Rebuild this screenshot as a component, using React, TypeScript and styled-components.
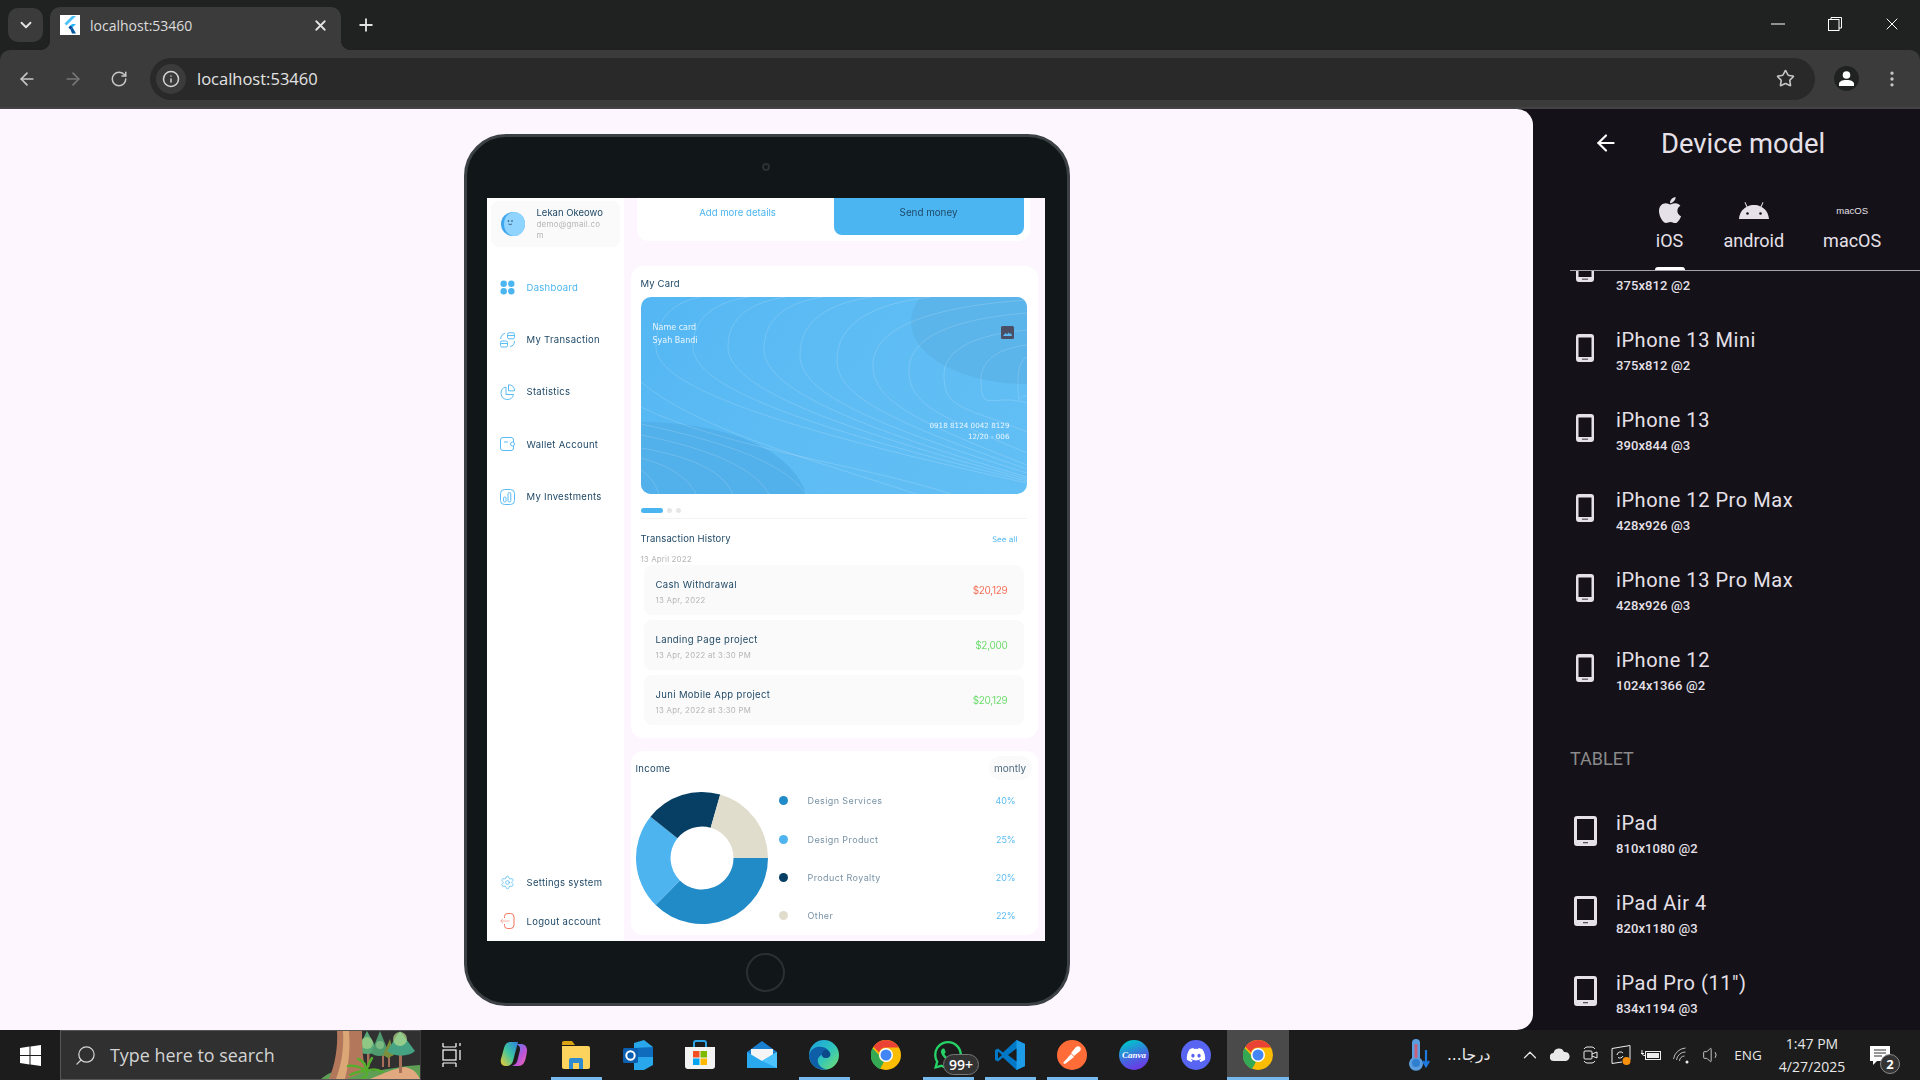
import styled, { createGlobalStyle } from 'styled-components';
import { ArrowLeft, ArrowRight, ChevronDown, ChevronUp, Info, MoreVertical, Plus, RotateCw, Search, Settings, Star, Volume1, X } from 'lucide-react';
import { FaApple, FaDiscord, FaWhatsapp } from 'react-icons/fa';

const GlobalStyle = createGlobalStyle`
    html, body {
        margin: 0;
        padding: 0;
        width: 1920px;
        height: 1080px;
        overflow: hidden;
        background: #202222;
    }
    * { box-sizing: border-box; }
`;

const uiFont = '"Open Sans", "Noto Sans", sans-serif';
const appFont = 'Inter, "Noto Sans", sans-serif';

/* ---------- browser chrome ---------- */

const Shell = styled.div`
    width: 1920px;
    height: 1080px;
    display: flex;
    flex-direction: column;
`;

const TabStrip = styled.div`
    height: 50px;
    background: #202222;
    display: flex;
    align-items: flex-end;
    padding-left: 8px;
    color: #e3e3e3;
`;

const TabSearch = styled.div`
    width: 35px;
    height: 34px;
    margin-bottom: 8px;
    border-radius: 10px;
    background: #3b3b3b;
    display: flex;
    align-items: center;
    justify-content: center;
`;

const Tab = styled.div`
    position: relative;
    width: 291px;
    height: 43px;
    margin-left: 7px;
    padding: 0 12px 7px 10px;
    background: #3b3b3b;
    border-radius: 10px 10px 0 0;
    display: flex;
    align-items: center;
    &::before, &::after {
        content: '';
        position: absolute;
        bottom: 0;
        width: 10px;
        height: 10px;
    }
    &::before {
        left: -10px;
        background: radial-gradient(circle at 0 0, transparent 10px, #3b3b3b 10.5px);
    }
    &::after {
        right: -10px;
        background: radial-gradient(circle at 100% 0, transparent 10px, #3b3b3b 10.5px);
    }
`;

const Favicon = styled.div`
    width: 20px;
    height: 20px;
    background: #fff;
    display: flex;
    align-items: center;
    justify-content: center;
`;

const TabTitle = styled.span`
    flex: 1;
    margin-left: 10px;
    font: 14px ${uiFont};
    color: #dcdcdc;
`;

const NewTab = styled.div`
    margin: 0 0 7px 15px;
    height: 36px;
    display: flex;
    align-items: center;
`;

const WindowButtons = styled.div`
    margin-left: auto;
    align-self: flex-start;
    display: flex;
`;

const WindowButton = styled.div`
    width: 57px;
    height: 47px;
    display: flex;
    align-items: center;
    justify-content: center;
`;

const Toolbar = styled.div`
    height: 59px;
    background: #3b3b3b;
    border-radius: 10px 10px 0 0;
    display: flex;
    align-items: center;
    padding-left: 9px;
    color: #c7c7c7;
    border-bottom: 2px solid #434343;
`;

const ToolButton = styled.div<{ $dim?: boolean }>`
    width: 36px;
    height: 36px;
    margin-right: 10px;
    display: flex;
    align-items: center;
    justify-content: center;
    color: ${(p) => (p.$dim ? '#777' : '#c7c7c7')};
`;

const Omnibox = styled.div`
    width: 1665px;
    height: 42px;
    margin-left: 3px;
    background: #292929;
    border-radius: 21px;
    display: flex;
    align-items: center;
    padding: 0 20px 0 6px;
`;

const SiteInfo = styled.div`
    width: 30px;
    height: 30px;
    border-radius: 50%;
    background: #3b3b3b;
    color: #d5d5d5;
    display: flex;
    align-items: center;
    justify-content: center;
`;

const Url = styled.span`
    flex: 1;
    margin-left: 11px;
    font: 16.5px ${uiFont};
    color: #e3e3e3;
`;

const Profile = styled.div`
    width: 25px;
    height: 25px;
    margin-left: 19px;
    border-radius: 50%;
    background: #202222;
    display: flex;
    align-items: center;
    justify-content: center;
`;

const MenuButton = styled.div`
    margin-left: 23px;
    display: flex;
    color: #c7c7c7;
`;

/* ---------- workspace ---------- */

const Workspace = styled.div`
    flex: 1;
    min-height: 0;
    display: flex;
    background: #141218;
`;

const Preview = styled.div`
    width: 1533px;
    background: #fdf6ff;
    border-radius: 0 16px 16px 0;
    display: flex;
    align-items: center;
    justify-content: center;
`;

const TabletFrame = styled.div`
    width: 606px;
    height: 872px;
    padding: 61px 22px 0 20px;
    background: #111618;
    border: 3px solid #3c4145;
    border-radius: 42px;
    display: flex;
    flex-direction: column;
    align-items: center;
    position: relative;
`;

const Camera = styled.div`
    position: absolute;
    top: 26px;
    left: 295px;
    width: 8px;
    height: 8px;
    border-radius: 50%;
    border: 2px solid #2b3034;
`;

const HomeButton = styled.div`
    width: 39px;
    height: 39px;
    margin-top: 12px;
    border-radius: 50%;
    border: 2px solid #2b3034;
`;

const Screen = styled.div`
    width: 558px;
    height: 743px;
    flex: none;
    display: flex;
    overflow: hidden;
    background: #fdf6ff;
    font-family: ${appFont};
    color: #1f4866;
    filter: blur(0.3px);
`;

const Sidebar = styled.div`
    width: 137px;
    flex: none;
    padding-top: 3px;
    background: #fff;
    display: flex;
    flex-direction: column;
`;

const UserCard = styled.div`
    height: 46px;
    margin: 0 4px;
    padding-left: 10px;
    border-radius: 8px;
    background: #fafafa;
    display: flex;
    align-items: center;
    gap: 12px;
`;

const UserText = styled.div`
    width: 68px;
    word-break: break-all;
`;

const UserName = styled.div`
    margin-bottom: 1px;
    font-size: 9.5px;
    line-height: 11px;
    white-space: nowrap;
`;

const UserMail = styled.div`
    font-size: 8px;
    line-height: 11px;
    color: #b5b5b5;
    letter-spacing: 0.2px;
`;

const NavList = styled.div<{ $bottom?: boolean }>`
    display: flex;
    flex-direction: column;
    margin-top: ${(p) => (p.$bottom ? 'auto' : '14.5px')};
`;

const NavItem = styled.div<{ $active?: boolean; $h: number }>`
    height: ${(p) => p.$h}px;
    padding-left: 13px;
    display: flex;
    align-items: center;
    gap: 12px;
    font-size: 9.5px;
    letter-spacing: 0.3px;
    color: ${(p) => (p.$active ? '#4bb5f1' : '#1f4866')};
    svg { flex: none; }
`;

const Main = styled.div`
    flex: 1;
    min-width: 0;
    overflow: hidden;
`;

const ActionCard = styled.div`
    height: 43px;
    margin: 0 15px 25px 13px;
    padding-right: 6px;
    background: #fff;
    border-radius: 0 0 12px 12px;
    display: flex;
`;

const DetailsLink = styled.div`
    width: 197px;
    height: 29.5px;
    padding-left: 5px;
    display: flex;
    align-items: center;
    justify-content: center;
    font-size: 9.6px;
    color: #4bb5f1;
`;

const SendButton = styled.div`
    flex: 1;
    height: 37px;
    padding-bottom: 7.5px;
    background: #4bb5f1;
    border-radius: 0 0 8px 8px;
    display: flex;
    align-items: center;
    justify-content: center;
    font-size: 9.8px;
`;

const Panel = styled.div`
    margin: 0 7px;
    background: #fff;
    border-radius: 12px;
`;

const CardPanel = styled(Panel)`
    padding: 12px 11px 13px 10px;
`;

const PanelTitle = styled.div`
    font-size: 9.5px;
    line-height: 12px;
    letter-spacing: 0.15px;
`;

const BankCard = styled.div`
    position: relative;
    height: 197px;
    margin-top: 7px;
    border-radius: 10px;
    overflow: hidden;
    background: linear-gradient(120deg, #54b7f3 0%, #5ebcf4 45%, #62bff5 100%);
    padding: 24.5px 17px 51.5px 12px;
    display: flex;
    flex-direction: column;
    justify-content: space-between;
    font-family: "DejaVu Sans", sans-serif;
    color: #eaf6fe;
`;

const CardArt = styled.svg`
    position: absolute;
    inset: 0;
`;

const CardHolder = styled.div`
    position: relative;
    font-size: 8px;
    line-height: 13px;
`;

const CardMeta = styled.div`
    position: relative;
    font-size: 7.2px;
    line-height: 11px;
    text-align: right;
`;

const MissingImage = styled.div`
    position: absolute;
    top: 29px;
    right: 13px;
    width: 13px;
    height: 13px;
    border-radius: 1.5px;
    background: #4a4f66;
    display: flex;
`;

const Pager = styled.div`
    height: 5px;
    margin-top: 14px;
    display: flex;
    align-items: center;
    gap: 4px;
`;

const PagerDot = styled.div<{ $on?: boolean }>`
    width: ${(p) => (p.$on ? 22 : 5)}px;
    height: 5px;
    border-radius: 3px;
    background: ${(p) => (p.$on ? '#4bb5f1' : '#e6e6e6')};
`;

const Rule = styled.div`
    height: 1px;
    margin-top: 5px;
    background: #f3f3f3;
`;

const HistoryHead = styled.div`
    margin-top: 14.5px;
    padding-right: 9px;
    display: flex;
    align-items: center;
    justify-content: space-between;
`;

const SeeAll = styled.span`
    font-family: "DejaVu Sans", sans-serif;
    font-size: 7.5px;
    color: #4bb5f1;
`;

const HistoryDate = styled.div`
    margin-top: 8.5px;
    font-size: 8px;
    line-height: 10px;
    letter-spacing: 0.1px;
    color: #b5b5b5;
`;

const HistoryList = styled.div`
    margin: 1px 3px 0;
    display: flex;
    flex-direction: column;
    gap: 5px;
`;

const HistoryRow = styled.div`
    height: 50px;
    padding: 0 16px 0 12px;
    border-radius: 8px;
    background: #fafafa;
    display: flex;
    align-items: center;
    justify-content: space-between;
`;

const RowText = styled.div`
    padding-top: 4px;
`;

const RowTitle = styled.div`
    font-size: 9.5px;
    line-height: 12px;
    letter-spacing: 0.35px;
`;

const RowDate = styled.div`
    margin-top: 4px;
    font-size: 7.8px;
    line-height: 10px;
    letter-spacing: 0.3px;
    color: #b5b5b5;
`;

const Amount = styled.div<{ $loss?: boolean }>`
    font-size: 10px;
    letter-spacing: -0.3px;
    color: ${(p) => (p.$loss ? '#f4725b' : '#6fdc6f')};
`;

const IncomePanel = styled(Panel)`
    margin-top: 13px;
    padding: 5px 6px 0 5px;
`;

const IncomeHead = styled.div`
    height: 24px;
    display: flex;
    align-items: center;
    justify-content: space-between;
`;

const IncomeTitle = styled(PanelTitle)`
    padding-top: 2px;
    letter-spacing: 0.3px;
`;

const PeriodPill = styled.div`
    width: 43px;
    height: 24px;
    border-radius: 12px;
    background: #fafafa;
    display: flex;
    align-items: center;
    justify-content: center;
    font-size: 10px;
    color: #4f6b80;
`;

const IncomeBody = styled.div`
    margin-top: 2px;
    display: flex;
    align-items: center;
`;

const Legend = styled.div`
    flex: 1;
    padding: 0 16px 0 11px;
    display: flex;
    flex-direction: column;
`;

const LegendRow = styled.div`
    height: 38.4px;
    display: flex;
    align-items: center;
    font-size: 9px;
    letter-spacing: 0.4px;
    color: #7792a6;
`;

const LegendDot = styled.div<{ $color: string }>`
    width: 9px;
    height: 9px;
    margin-right: 20px;
    border-radius: 50%;
    background: ${(p) => p.$color};
`;

const LegendValue = styled.span`
    margin-left: auto;
    letter-spacing: -0.1px;
    color: #5bbcf5;
`;

/* ---------- device panel ---------- */

const DevicePanel = styled.div`
    width: 387px;
    padding-left: 37px;
    display: flex;
    flex-direction: column;
    overflow: hidden;
    font-family: Roboto, sans-serif;
    color: #e6e0e9;
`;

const PanelHeader = styled.div`
    height: 68px;
    flex: none;
    padding-left: 23px;
    display: flex;
    align-items: center;
    gap: 42px;
`;

const PanelHeading = styled.div`
    padding-top: 2px;
    font-size: 27.4px;
`;

const TabBar = styled.div`
    height: 94px;
    flex: none;
    padding: 21px 0 0 65px;
    display: flex;
    border-bottom: 1px solid #a5a2a9;
`;

const PlatformTab = styled.div<{ $active?: boolean }>`
    position: relative;
    padding: 0 19.5px;
    display: flex;
    flex-direction: column;
    align-items: center;
    font-size: 18px;
    line-height: 20px;
    &::after {
        content: ${(p) => (p.$active ? "''" : 'none')};
        position: absolute;
        left: 50%;
        bottom: 0;
        width: 30px;
        height: 3px;
        margin-left: -15px;
        border-radius: 3px 3px 0 0;
        background: #fff;
    }
`;

const PlatformIcon = styled.div`
    height: 30px;
    margin-bottom: 6px;
    margin-top: -3px;
    display: flex;
    align-items: center;
    font: 9.5px "Liberation Sans", sans-serif;
    color: #e6e0e9;
`;

const DeviceList = styled.div`
    flex: 1;
    min-height: 0;
    overflow: hidden;
`;

const DeviceScroll = styled.div`
    margin-top: -40px;
`;

const DeviceRow = styled.div`
    height: 80px;
    display: flex;
    align-items: center;
    gap: 16px;
`;

const DeviceGlyph = styled.div`
    width: 30px;
    margin-top: -6px;
    display: flex;
    justify-content: center;
`;

const DeviceName = styled.div`
    font-size: 20px;
    line-height: 28px;
    letter-spacing: 0.55px;
`;

const DeviceSize = styled.div`
    margin-top: 2px;
    font-size: 13px;
    font-weight: 500;
    line-height: 20px;
    letter-spacing: 0.1px;
`;

const SectionLabel = styled.div`
    height: 83px;
    padding-top: 37px;
    font-size: 18px;
    line-height: 22px;
    color: #8a8a8a;
`;

/* ---------- taskbar ---------- */

const Taskbar = styled.div`
    height: 50px;
    flex: none;
    background: #1c1c1c;
    display: flex;
    font-family: ${uiFont};
    color: #e8e8e8;
`;

const StartButton = styled.div`
    width: 60px;
    display: flex;
    align-items: center;
    justify-content: center;
`;

const SearchBox = styled.div`
    width: 361px;
    padding-left: 13px;
    background: #303030;
    border: 1px solid #565656;
    border-right-color: #3a3a3a;
    display: flex;
    align-items: center;
    color: #d4d4d4;
    font-size: 17.9px;
    overflow: hidden;
`;

const SearchText = styled.span`
    margin-left: 13px;
    white-space: nowrap;
`;

const Scene = styled.svg`
    margin-left: auto;
    flex: none;
    overflow: visible;
`;

const TaskSlot = styled.div<{ $running?: boolean; $focused?: boolean }>`
    position: relative;
    width: 62px;
    flex: none;
    display: flex;
    align-items: center;
    justify-content: center;
    background: ${(p) => (p.$focused ? '#4a4a4a' : 'transparent')};
    &::after {
        content: ${(p) => (p.$running ? "''" : 'none')};
        position: absolute;
        bottom: 0;
        left: ${(p) => (p.$focused ? 0 : 5.5)}px;
        right: ${(p) => (p.$focused ? 0 : 5.5)}px;
        height: 3px;
        background: #76b9ed;
    }
`;

const CountBadge = styled.div`
    position: absolute;
    left: 26px;
    top: 24px;
    width: 36px;
    height: 21px;
    border-radius: 11px;
    background: #333;
    border: 1px solid #777;
    display: flex;
    align-items: center;
    justify-content: center;
    font: 600 14px ${uiFont};
    color: #fff;
`;

const Tray = styled.div`
    margin-left: auto;
    display: flex;
    padding-right: 15px;
`;

const Weather = styled.div`
    width: 110px;
    padding-left: 3px;
    display: flex;
    align-items: center;
    gap: 17px;
    font: 15.5px "DejaVu Sans", sans-serif;
`;

const TrayIcon = styled.div`
    width: 30.3px;
    display: flex;
    align-items: center;
    justify-content: center;
`;

const LangLabel = styled.div`
    width: 42px;
    display: flex;
    align-items: center;
    justify-content: center;
    font-size: 13.5px;
`;

const Clock = styled.div`
    width: 86px;
    display: flex;
    flex-direction: column;
    align-items: center;
    justify-content: center;
    font-size: 14px;
    line-height: 23px;
`;

const Notify = styled.div`
    position: relative;
    width: 50px;
    display: flex;
    align-items: center;
    justify-content: center;
`;

const NotifyCount = styled.div`
    position: absolute;
    left: 25px;
    top: 24px;
    width: 20px;
    height: 20px;
    border-radius: 50%;
    background: #333;
    border: 1px solid #8a8a8a;
    display: flex;
    align-items: center;
    justify-content: center;
    font: 700 13px ${uiFont};
    color: #fff;
`;

/* ---------- drawings ---------- */

const FlutterMark = () => (
    <svg width="14" height="18" viewBox="0 0 14 18">
        <path d="M9 0h4L3.5 9.5 1.5 7.5z" fill="#4fc3f7" />
        <path d="M9 8h4L7.5 13.5l-2-2z" fill="#29b6f6" />
        <path d="M5.5 11.5l2-2 2 2-2 2z" fill="#0d47a1" />
        <path d="M7.5 13.5l2-2 3.5 6H9z" fill="#01579b" />
    </svg>
);

const UserGlyph = () => (
    <svg width="17" height="17" viewBox="0 0 17 17" fill="#fff">
        <circle cx="8.5" cy="5" r="3.8" />
        <path d="M1 16v-2c0-2.5 3-4 7.5-4s7.5 1.5 7.5 4v2z" />
    </svg>
);

const RestoreGlyph = () => (
    <svg width="14" height="14" viewBox="0 0 14 14" fill="none" stroke="#fff">
        <rect x="0.5" y="2.5" width="10.5" height="11" />
        <path d="M3 2.5V0.5h10.5v10.5h-2.5" />
    </svg>
);

const Avatar = () => (
    <svg width="24" height="24" viewBox="0 0 24 24">
        <circle cx="12" cy="12" r="12" fill="#3fa6ee" />
        <ellipse cx="13.5" cy="12" rx="10.5" ry="12" fill="#8ed4ff" />
        <circle cx="7.5" cy="9" r="0.8" fill="#22384a" />
        <circle cx="11" cy="9" r="0.8" fill="#22384a" />
        <path d="M7.5 12q1.7 1.2 3.5 0" stroke="#22384a" strokeWidth="0.7" fill="none" />
    </svg>
);

const DashboardIcon = () => (
    <svg width="15" height="15" viewBox="0 0 15 15" fill="#4bb5f1">
        <circle cx="3.7" cy="3.7" r="3.2" />
        <circle cx="11.3" cy="3.7" r="3.2" />
        <circle cx="3.7" cy="11.3" r="3.2" />
        <circle cx="11.3" cy="11.3" r="3.2" />
    </svg>
);

const TransactionIcon = () => (
    <svg width="15" height="16" viewBox="0 0 15 16" fill="none" stroke="#5bbcf5" strokeWidth="1">
        <rect x="7.5" y="0.8" width="7" height="6" rx="1.5" />
        <path d="M7.5 3.5h7" />
        <rect x="0.5" y="9" width="7" height="6" rx="1.5" />
        <path d="M0.5 11.5h7" />
        <path d="M0.7 7c0-3 1.5-5 4.3-5.5M14.5 9c0 3-1.5 5-4.3 5.5" />
    </svg>
);

const StatisticsIcon = () => (
    <svg width="15" height="16" viewBox="0 0 15 16" fill="none" stroke="#5bbcf5" strokeWidth="1">
        <path d="M6 3a6.3 6.3 0 1 0 7.5 7.5H6z" />
        <path d="M8.5 0.8a5.5 5.5 0 0 1 6 6h-6z" />
    </svg>
);

const WalletIcon = () => (
    <svg width="15" height="14" viewBox="0 0 15 14" fill="none" stroke="#5bbcf5" strokeWidth="1">
        <path d="M13.5 5V3a2.5 2.5 0 0 0-2.5-2.5H3A2.5 2.5 0 0 0 0.5 3v8A2.5 2.5 0 0 0 3 13.5h8a2.5 2.5 0 0 0 2.5-2.5V9" />
        <rect x="10.5" y="5" width="4" height="4" rx="2" />
        <path d="M4 5h4" />
    </svg>
);

const InvestIcon = () => (
    <svg width="15" height="16" viewBox="0 0 15 16" fill="none" stroke="#5bbcf5" strokeWidth="1">
        <rect x="0.5" y="0.5" width="14" height="15" rx="4" />
        <rect x="3.5" y="8" width="2.5" height="5" rx="1.2" />
        <rect x="8" y="3.5" width="2.8" height="9.5" rx="1.4" />
    </svg>
);

const LogoutIcon = () => (
    <svg width="15" height="16" viewBox="0 0 15 16" fill="none" stroke="#f4725b" strokeWidth="1">
        <path d="M4.5 5V3.5a3 3 0 0 1 3-3h3A3.5 3.5 0 0 1 14 4v8a3.5 3.5 0 0 1-3.5 3.5h-3a3 3 0 0 1-3-3V11" />
        <path d="M9.5 8H0.8M3 5.8L0.8 8 3 10.2" strokeOpacity="0.55" />
    </svg>
);

// contour lines on the card: [apex x, apex y, end x of the upper arm, end y, end y of the lower arm]
const contours = [
    [15, 50, 60, 0, 186], [52, 50, 108, 0, 184], [87, 50, 145, 0, 182], [123, 52, 182, 0, 180],
    [159, 58, 232, 0, 176], [196, 63, 290, 0, 172], [232, 68, 386, 3, 168], [268, 73, 386, 16, 156],
    [303, 78, 386, 33, 135], [340, 83, 386, 48, 106], [377, 84, 386, 60, 100],
];

const CardPattern = () => (
    <CardArt width="386" height="197" viewBox="0 0 386 197">
        <ellipse cx="385" cy="25" rx="115" ry="62" fill="#5bb5ea" />
        <path d="M0 125C80 125 150 150 165 197H0z" fill="#52b0ea" />
        <g fill="none" stroke="#fff" strokeOpacity="0.16" strokeWidth="1">
            {contours.map(([ax, ay, ux, uy, ly]) => (
                <path
                    key={ax}
                    d={`M${ux} ${uy}C${ax + (ux - ax) * 0.4} ${uy + (ay - uy) * 0.1} ${ax} ${ay - (ay - uy) * 0.6} ${ax} ${ay}C${ax} ${ay + 35} ${ax + (386 - ax) * 0.25} ${ly - (ly - ay) * 0.45} 386 ${ly}`}
                />
            ))}
            <path d="M0 85C60 135 180 165 275 197" />
            <path d="M0 110C80 150 230 170 310 197" />
            <path d="M0 127C60 140 140 160 165 197" />
            <path d="M0 138C50 148 110 165 128 197" />
            <path d="M0 151C40 158 80 170 92 197" />
            <path d="M0 161C25 168 45 178 55 197" />
            <path d="M0 173C8 178 14 186 18 197" />
        </g>
    </CardArt>
);

const slices = [
    { from: 0, to: 134.6, color: '#218bc8' },
    { from: 134.6, to: 218.7, color: '#4db4f0' },
    { from: 218.7, to: 286, color: '#063f63' },
    { from: 286, to: 360, color: '#e0ddcd' },
];

const slicePath = (from: number, to: number) => {
    const at = (deg: number, r: number) => {
        const rad = (deg * Math.PI) / 180;
        return `${(66 + r * Math.cos(rad)).toFixed(2)} ${(66 + r * Math.sin(rad)).toFixed(2)}`;
    };
    return `M${at(from, 31.5)}L${at(from, 66)}A66 66 0 0 1 ${at(to, 66)}L${at(to, 31.5)}A31.5 31.5 0 0 0 ${at(from, 31.5)}Z`;
};

const Donut = () => (
    <svg width="132" height="132" viewBox="0 0 132 132" style={{ flex: 'none' }}>
        {slices.map((s) => (
            <path key={s.from} d={slicePath(s.from, s.to)} fill={s.color} />
        ))}
    </svg>
);

const AndroidHead = () => (
    <svg width="30" height="18" viewBox="0 0 30 18" fill="#e6e0e9">
        <path d="M0 18C0.5 12 3.5 8 7.5 6L5.5 1.5 6.3 1l2.2 4.4C10.5 4.5 12.7 4 15 4s4.5.5 6.5 1.4L23.7 1l.8.5L22.5 6c4 2 7 6 7.5 12z" />
        <circle cx="8.5" cy="12.5" r="1.3" fill="#141218" />
        <circle cx="21.5" cy="12.5" r="1.3" fill="#141218" />
    </svg>
);

const PhoneGlyph = () => (
    <svg width="18" height="28" viewBox="0 0 18 28">
        <path fillRule="evenodd" d="M3 0h12a3 3 0 0 1 3 3v22a3 3 0 0 1-3 3H3a3 3 0 0 1-3-3V3a3 3 0 0 1 3-3zM2.5 3.5v19.500h13V3.500z" fill="#e6e0e9" />
        <rect x="6" y="24.6" width="6" height="1.2" fill="#555" />
    </svg>
);

const TabletGlyph = () => (
    <svg width="23" height="30" viewBox="0 0 23 30">
        <path fillRule="evenodd" d="M3 0h17a3 3 0 0 1 3 3v24a3 3 0 0 1-3 3H3a3 3 0 0 1-3-3V3a3 3 0 0 1 3-3zM3 3v21h17V3z" fill="#e6e0e9" />
        <rect x="9" y="26" width="5" height="1.3" fill="#555" />
    </svg>
);

const WindowsLogo = () => (
    <svg width="21" height="21" viewBox="0 0 21 21" fill="#fff">
        <path d="M0 3l9.5-1.4v8.4H0zM10.5 1.4L21 0v10H10.5zM0 11h9.5v8.4L0 18zM10.5 11H21v10l-10.5-1.5z" />
    </svg>
);

const ForestScene = () => (
    <Scene width="90" height="48" viewBox="0 0 90 48">
        <path d="M-9 48C-2 42 4 40 10 40H45C60 38 72 35 90 34V48z" fill="#5e9f55" />
        <path d="M40 48C55 42 62 38 75 36 85 38 88 44 90 48z" fill="#e2a981" />
        <path d="M37 20h2.5v16H37zM52 20h2v16h-2zM58 22h2v14h-2zM69 22h3v20h-3z" fill="#a86f58" />
        <path d="M37 0l11 20c-6 4-16 4-21 0z" fill="#5aa878" />
        <circle cx="37" cy="12" r="6" fill="#a5d48a" opacity="0.7" />
        <path d="M50 0l9 22c-5 4-14 4-18 0z" fill="#4f9a6f" />
        <circle cx="50" cy="14" r="4" fill="#8ec78a" opacity="0.7" />
        <path d="M60 8l4 16-6 3-5-3z" fill="#7d8f3a" />
        <path d="M70 0l15 20c-6 6-22 6-28 0z" fill="#45a383" />
        <circle cx="70" cy="8" r="7" fill="#b7dd8e" opacity="0.7" />
        <path d="M7 0h25c0 18 1 30 4 40L17 48H-1C5 34 8 16 7 0z" fill="#b3775c" />
        <path d="M13 0h6c1 14 1 28-4 48H6c6-16 8-32 7-48z" fill="#dba776" />
        <g stroke="#56ae2e" strokeWidth="2.5" fill="none" strokeLinecap="round">
            <path d="M36 40C32 36 24 34 18 35" />
            <path d="M36 40C30 40 24 42 20 44" />
            <path d="M36 40C36 34 34 30 28 28" />
            <path d="M36 40C38 34 40 30 42 27" />
            <path d="M36 40C42 38 48 38 52 41" />
            <path d="M36 40C38 44 36 46 32 48" />
        </g>
    </Scene>
);

const TaskViewIcon = () => (
    <svg width="20" height="26" viewBox="0 0 20 26" fill="none" stroke="#fff" strokeWidth="1.2">
        <path d="M1 5V1M14 1v4M1 5h13M1 25v-4M14 25v-4M1 21h13" />
        <rect x="1" y="8" width="13" height="10" />
        <path d="M18 1v3M18 8v10" />
    </svg>
);

const CopilotIcon = () => (
    <svg width="28" height="28" viewBox="0 0 28 28">
        <defs>
            <linearGradient id="copA" x1="0" y1="1" x2="1" y2="0">
                <stop offset="0" stopColor="#f7c82f" />
                <stop offset="0.5" stopColor="#3fc6a0" />
                <stop offset="1" stopColor="#2a7fe0" />
            </linearGradient>
            <linearGradient id="copB" x1="0" y1="0" x2="1" y2="1">
                <stop offset="0" stopColor="#3a86f0" />
                <stop offset="0.6" stopColor="#c054d8" />
                <stop offset="1" stopColor="#f06fa0" />
            </linearGradient>
        </defs>
        <path d="M10 1h8l-5 19c-.8 3-3 5-6 5H5C2 25 0 22 1 18L4 7C5 3 7 1 10 1z" fill="url(#copA)" />
        <path d="M15 3h6c3 0 6 2 6 6 0 2-.5 5-1.5 9-1 4-3 7-7 7H12l2-1c2-1 3-3 3.5-5L20 9c.5-3-1-5-5-6z" fill="url(#copB)" />
    </svg>
);

const ExplorerIcon = () => (
    <svg width="28" height="30" viewBox="0 0 28 30">
        <path d="M0 3a2 2 0 0 1 2-2h8l3 4H0z" fill="#d9a210" />
        <path d="M0 6h26a2 2 0 0 1 2 2v19a2 2 0 0 1-2 2H2a2 2 0 0 1-2-2z" fill="#fcd35c" />
        <path d="M7 29V20a2 2 0 0 1 2-2h10a2 2 0 0 1 2 2v9h-4v-6h-6v6z" fill="#2f8bd0" />
    </svg>
);

const OutlookIcon = () => (
    <svg width="30" height="30" viewBox="0 0 30 30">
        <path d="M11 3l10-3 9 7v18l-9 5H11z" fill="#28a8ea" />
        <path d="M30 7v10H11V8z" fill="#0f6cbd" />
        <rect x="0" y="8" width="15" height="15" rx="1.5" fill="#0a5fb0" />
        <circle cx="7.5" cy="15.5" r="4.2" fill="none" stroke="#fff" strokeWidth="2" />
    </svg>
);

const StoreIcon = () => (
    <svg width="30" height="30" viewBox="0 0 30 30">
        <path d="M9 7V3a2 2 0 0 1 2-2h8a2 2 0 0 1 2 2v4" fill="none" stroke="#2ba5e8" strokeWidth="2" />
        <path d="M0 7h30v19a3 3 0 0 1-3 3H3a3 3 0 0 1-3-3z" fill="#f3f3f3" />
        <rect x="8" y="11" width="6.5" height="6.5" fill="#f25022" />
        <rect x="15.5" y="11" width="6.5" height="6.5" fill="#7fba00" />
        <rect x="8" y="18.5" width="6.5" height="6.5" fill="#00a4ef" />
        <rect x="15.5" y="18.5" width="6.5" height="6.5" fill="#ffb900" />
    </svg>
);

const MailIcon = () => (
    <svg width="30" height="30" viewBox="0 0 30 30">
        <path d="M0 12L15 1l15 11v16H0z" fill="#1b7fd0" />
        <path d="M4 9h22v9l-11 6-11-6z" fill="#f5f5f5" />
        <path d="M0 12v16h30V12L15 21z" fill="#2aa8ee" />
        <path d="M15 21l15 7V12z" fill="#4cc2ff" />
    </svg>
);

const EdgeIcon = () => (
    <svg width="30" height="30" viewBox="0 0 30 30">
        <defs>
            <linearGradient id="edgeTop" x1="0" y1="0" x2="1" y2="1">
                <stop offset="0" stopColor="#1a9fe0" />
                <stop offset="0.5" stopColor="#2cc3c0" />
                <stop offset="1" stopColor="#78e06a" />
            </linearGradient>
        </defs>
        <circle cx="15" cy="15" r="15" fill="url(#edgeTop)" />
        <path d="M0 15C2 8 8 6 13 7c7 1 9 7 7 10-2 2-7 1-7-2-4 1-6 6-2 11 2 2 6 4 9 3-3 1-7 1-10 0C4 27 0 21 0 15z" fill="#0f5fa8" />
        <path d="M13 15c0 3 5 4 7 2 3-2 1-6-2-7-3-1-5 2-5 5z" fill="#0c4a8c" />
    </svg>
);

const ChromeIcon = () => (
    <svg width="30" height="30" viewBox="0 0 30 30">
        <circle cx="15" cy="15" r="15" fill="#fbbc04" />
        <path d="M15 0a15 15 0 0 1 13 7.5H15a7.5 7.5 0 0 0-7 5L2.5 6.8A15 15 0 0 1 15 0z" fill="#ea4335" />
        <path d="M8 15a7 7 0 0 0 5 6.7L9 29A15 15 0 0 1 1.5 8z" fill="#34a853" />
        <circle cx="15" cy="15" r="7" fill="#fff" />
        <circle cx="15" cy="15" r="5.5" fill="#4285f4" />
    </svg>
);

const VSCodeIcon = () => (
    <svg width="30" height="30" viewBox="0 0 30 30">
        <path d="M21.5 0L30 4v22l-8.5 4L8 17.5l-5 4L0 20V10l3-1.5 5 4z" fill="#0078c8" />
        <path d="M21.5 0L30 4v22l-8.5 4z" fill="#1f9ce8" />
        <path d="M21.5 8.5L13 15l8.5 6.5z" fill="#1c1c1c" />
        <path d="M3 11.5v7L7 15z" fill="#1c1c1c" />
    </svg>
);

const PostmanIcon = () => (
    <svg width="30" height="30" viewBox="0 0 30 30">
        <circle cx="15" cy="15" r="15" fill="#ff6c37" />
        <path d="M6 23l8-9 3 3-9 7z" fill="#fff" />
        <path d="M14 13l5-6c1-1 3-1 4 0s1 3 0 4l-6 5z" fill="#fff" />
    </svg>
);

const CanvaBadge = styled.div`
    width: 30px;
    height: 30px;
    border-radius: 50%;
    background: linear-gradient(160deg, #00c4cc 10%, #4a5fe0 60%, #7d2ae8 100%);
    display: flex;
    align-items: center;
    justify-content: center;
    font: italic 700 9px "Liberation Serif", serif;
    color: #fff;
`;

const DiscordBadge = styled.div`
    width: 30px;
    height: 30px;
    border-radius: 50%;
    background: #5865f2;
    display: flex;
    align-items: center;
    justify-content: center;
`;

const ThermoIcon = () => (
    <svg width="22" height="32" viewBox="0 0 22 32">
        <path d="M4 4a4 4 0 0 1 8 0v15a7 7 0 1 1-8 0z" fill="#5b9ee0" />
        <path d="M6.5 5h3v14h-3z" fill="#c9607a" />
        <circle cx="8" cy="24" r="4" fill="#2f7fd0" />
        <path d="M18 11v15M15 22l3 5 3-5" stroke="#1f7ae0" strokeWidth="2.2" fill="none" />
    </svg>
);

const CloudIcon = () => (
    <svg width="20" height="14" viewBox="0 0 20 14">
        <path d="M4 13a4 4 0 0 1-.5-8A5.5 5.5 0 0 1 14 4a4.5 4.5 0 0 1 2 9z" fill="#e8e8e8" />
    </svg>
);

const MeetIcon = () => (
    <svg width="16" height="20" viewBox="0 0 16 20" fill="none" stroke="#eee" strokeWidth="1">
        <path d="M1 4a4 4 0 0 1 3-2h5a4 4 0 0 1 3 2M1 16a4 4 0 0 0 3 2h5a4 4 0 0 0 3-2" />
        <rect x="1" y="6" width="8" height="8" rx="1" />
        <path d="M9 9l5-2v6l-5-2" />
    </svg>
);

const SyncIcon = () => (
    <svg width="20" height="20" viewBox="0 0 20 20" fill="none" stroke="#eee" strokeWidth="1">
        <path d="M1 3.5L19 .5v14l-5 1.5M1 3.5v15l10-1.5" />
        <path d="M6 10a3.5 3.5 0 0 1 6-2M12 11a3.5 3.5 0 0 1-5 1.5" />
        <circle cx="15.5" cy="16" r="4" fill="#f7900c" stroke="none" />
    </svg>
);

const BatteryIcon = () => (
    <svg width="20" height="12" viewBox="0 0 20 12" fill="none" stroke="#eee" strokeWidth="1">
        <rect x="4.5" y="2.5" width="15" height="8" />
        <rect x="6" y="4" width="12" height="5" fill="#eee" stroke="none" />
        <path d="M0 4.5h3M1 1v3.5c0 1.5 1.5 2 3 2" />
    </svg>
);

const WifiIcon = () => (
    <svg width="17" height="17" viewBox="0 0 17 17" fill="none" stroke="#bbb" strokeWidth="1">
        <path d="M.5 12a13 13 0 0 1 12-11M3.5 13a9 9 0 0 1 9-8M6.5 14a5 5 0 0 1 5-5" />
        <circle cx="14" cy="15" r="1.5" fill="#eee" stroke="none" />
    </svg>
);

const BubbleIcon = () => (
    <svg width="20" height="19" viewBox="0 0 20 19">
        <path d="M0 0h20v15H7l-4 4v-4H0z" fill="#fff" />
        <path d="M4 4h12M4 7h12M4 10h8" stroke="#333" strokeWidth="1" />
    </svg>
);

/* ---------- data ---------- */

const phones = [
    { name: 'iPhone 13 Pro', size: '375x812 @2' },
    { name: 'iPhone 13 Mini', size: '375x812 @2' },
    { name: 'iPhone 13', size: '390x844 @3' },
    { name: 'iPhone 12 Pro Max', size: '428x926 @3' },
    { name: 'iPhone 13 Pro Max', size: '428x926 @3' },
    { name: 'iPhone 12', size: '1024x1366 @2' },
];

const tablets = [
    { name: 'iPad', size: '810x1080 @2' },
    { name: 'iPad Air 4', size: '820x1180 @3' },
    { name: 'iPad Pro (11")', size: '834x1194 @3' },
];

const history = [
    { title: 'Cash Withdrawal', date: '13 Apr, 2022', amount: '$20,129', loss: true },
    { title: 'Landing Page project', date: '13 Apr, 2022 at 3:30 PM', amount: '$2,000' },
    { title: 'Juni Mobile App project', date: '13 Apr, 2022 at 3:30 PM', amount: '$20,129' },
];

const legend = [
    { label: 'Design Services', value: '40%', color: '#218bc8' },
    { label: 'Design Product', value: '25%', color: '#4db4f0' },
    { label: 'Product Royalty', value: '20%', color: '#063f63' },
    { label: 'Other', value: '22%', color: '#e0ddcd' },
];

const App = () => {
    return (
        <Shell>
            <GlobalStyle />
            <TabStrip>
                <TabSearch><ChevronDown size={18} strokeWidth={2.5} /></TabSearch>
                <Tab>
                    <Favicon><FlutterMark /></Favicon>
                    <TabTitle>localhost:53460</TabTitle>
                    <X size={17} strokeWidth={2.5} />
                </Tab>
                <NewTab><Plus size={20} strokeWidth={2.2} /></NewTab>
                <WindowButtons>
                    <WindowButton>
                        <svg width="14" height="2"><path d="M0 1h14" stroke="#fff" /></svg>
                    </WindowButton>
                    <WindowButton><RestoreGlyph /></WindowButton>
                    <WindowButton><X size={20} strokeWidth={1.2} color="#fff" /></WindowButton>
                </WindowButtons>
            </TabStrip>
            <Toolbar>
                <ToolButton><ArrowLeft size={20} /></ToolButton>
                <ToolButton $dim><ArrowRight size={20} /></ToolButton>
                <ToolButton><RotateCw size={18} /></ToolButton>
                <Omnibox>
                    <SiteInfo><Info size={18} /></SiteInfo>
                    <Url>localhost:53460</Url>
                    <Star size={19} color="#c7c7c7" />
                </Omnibox>
                <Profile><UserGlyph /></Profile>
                <MenuButton><MoreVertical size={20} /></MenuButton>
            </Toolbar>
            <Workspace>
                <Preview>
                    <TabletFrame>
                        <Camera />
                        <Screen>
                            <Sidebar>
                                <UserCard>
                                    <Avatar />
                                    <UserText>
                                        <UserName>Lekan Okeowo</UserName>
                                        <UserMail>demo@gmail.com</UserMail>
                                    </UserText>
                                </UserCard>
                                <NavList>
                                    <NavItem $h={52.4} $active><DashboardIcon />Dashboard</NavItem>
                                    <NavItem $h={52.4}><TransactionIcon />My Transaction</NavItem>
                                    <NavItem $h={52.4}><StatisticsIcon />Statistics</NavItem>
                                    <NavItem $h={52.4}><WalletIcon />Wallet Account</NavItem>
                                    <NavItem $h={52.4}><InvestIcon />My Investments</NavItem>
                                </NavList>
                                <NavList $bottom>
                                    <NavItem $h={39}><Settings size={15} color="#5bbcf5" strokeWidth={1.3} />Settings system</NavItem>
                                    <NavItem $h={39}><LogoutIcon />Logout account</NavItem>
                                </NavList>
                            </Sidebar>
                            <Main>
                                <ActionCard>
                                    <DetailsLink>Add more details</DetailsLink>
                                    <SendButton>Send money</SendButton>
                                </ActionCard>
                                <CardPanel>
                                    <PanelTitle>My Card</PanelTitle>
                                    <BankCard>
                                        <CardPattern />
                                        <CardHolder>
                                            Name card
                                            <br />
                                            Syah Bandi
                                        </CardHolder>
                                        <MissingImage>
                                            <svg width="13" height="13" viewBox="0 0 13 13">
                                                <path d="M2 10l2.5-3 1.5 1.5 1.5-2L9 8l1-1 1 3z" fill="#5bbcf5" />
                                            </svg>
                                        </MissingImage>
                                        <CardMeta>
                                            0918 8124 0042 8129
                                            <br />
                                            12/20 - 006
                                        </CardMeta>
                                    </BankCard>
                                    <Pager>
                                        <PagerDot $on />
                                        <PagerDot />
                                        <PagerDot />
                                    </Pager>
                                    <Rule />
                                    <HistoryHead>
                                        <PanelTitle>Transaction History</PanelTitle>
                                        <SeeAll>See all</SeeAll>
                                    </HistoryHead>
                                    <HistoryDate>13 April 2022</HistoryDate>
                                    <HistoryList>
                                        {history.map((row) => (
                                            <HistoryRow key={row.title}>
                                                <RowText>
                                                    <RowTitle>{row.title}</RowTitle>
                                                    <RowDate>{row.date}</RowDate>
                                                </RowText>
                                                <Amount $loss={row.loss}>{row.amount}</Amount>
                                            </HistoryRow>
                                        ))}
                                    </HistoryList>
                                </CardPanel>
                                <IncomePanel>
                                    <IncomeHead>
                                        <IncomeTitle>Income</IncomeTitle>
                                        <PeriodPill>montly</PeriodPill>
                                    </IncomeHead>
                                    <IncomeBody>
                                        <Donut />
                                        <Legend>
                                            {legend.map((item) => (
                                                <LegendRow key={item.label}>
                                                    <LegendDot $color={item.color} />
                                                    {item.label}
                                                    <LegendValue>{item.value}</LegendValue>
                                                </LegendRow>
                                            ))}
                                        </Legend>
                                    </IncomeBody>
                                </IncomePanel>
                            </Main>
                        </Screen>
                        <HomeButton />
                    </TabletFrame>
                </Preview>
                <DevicePanel>
                    <PanelHeader>
                        <ArrowLeft size={26} strokeWidth={2} color="#fff" />
                        <PanelHeading>Device model</PanelHeading>
                    </PanelHeader>
                    <TabBar>
                        <PlatformTab $active>
                            <PlatformIcon><FaApple size={30} /></PlatformIcon>
                            iOS
                        </PlatformTab>
                        <PlatformTab>
                            <PlatformIcon><AndroidHead /></PlatformIcon>
                            android
                        </PlatformTab>
                        <PlatformTab>
                            <PlatformIcon>macOS</PlatformIcon>
                            macOS
                        </PlatformTab>
                    </TabBar>
                    <DeviceList>
                        <DeviceScroll>
                            {phones.map((d) => (
                                <DeviceRow key={d.name}>
                                    <DeviceGlyph><PhoneGlyph /></DeviceGlyph>
                                    <div>
                                        <DeviceName>{d.name}</DeviceName>
                                        <DeviceSize>{d.size}</DeviceSize>
                                    </div>
                                </DeviceRow>
                            ))}
                            <SectionLabel>TABLET</SectionLabel>
                            {tablets.map((d) => (
                                <DeviceRow key={d.name}>
                                    <DeviceGlyph><TabletGlyph /></DeviceGlyph>
                                    <div>
                                        <DeviceName>{d.name}</DeviceName>
                                        <DeviceSize>{d.size}</DeviceSize>
                                    </div>
                                </DeviceRow>
                            ))}
                        </DeviceScroll>
                    </DeviceList>
                </DevicePanel>
            </Workspace>
            <Taskbar>
                <StartButton><WindowsLogo /></StartButton>
                <SearchBox>
                    <Search size={23} strokeWidth={1.3} style={{ transform: 'scaleX(-1)' }} />
                    <SearchText>Type here to search</SearchText>
                    <ForestScene />
                </SearchBox>
                <TaskSlot><TaskViewIcon /></TaskSlot>
                <TaskSlot><CopilotIcon /></TaskSlot>
                <TaskSlot $running><ExplorerIcon /></TaskSlot>
                <TaskSlot><OutlookIcon /></TaskSlot>
                <TaskSlot><StoreIcon /></TaskSlot>
                <TaskSlot><MailIcon /></TaskSlot>
                <TaskSlot $running><EdgeIcon /></TaskSlot>
                <TaskSlot><ChromeIcon /></TaskSlot>
                <TaskSlot $running>
                    <FaWhatsapp size={32} color="#25d366" />
                    <CountBadge>99+</CountBadge>
                </TaskSlot>
                <TaskSlot $running><VSCodeIcon /></TaskSlot>
                <TaskSlot $running><PostmanIcon /></TaskSlot>
                <TaskSlot><CanvaBadge>Canva</CanvaBadge></TaskSlot>
                <TaskSlot><DiscordBadge><FaDiscord size={20} color="#fff" /></DiscordBadge></TaskSlot>
                <TaskSlot $running $focused><ChromeIcon /></TaskSlot>
                <Tray>
                    <Weather>
                        <ThermoIcon />
                        <span dir="rtl">درجا...</span>
                    </Weather>
                    <TrayIcon><ChevronUp size={22} strokeWidth={1.3} /></TrayIcon>
                    <TrayIcon><CloudIcon /></TrayIcon>
                    <TrayIcon><MeetIcon /></TrayIcon>
                    <TrayIcon><SyncIcon /></TrayIcon>
                    <TrayIcon><BatteryIcon /></TrayIcon>
                    <TrayIcon><WifiIcon /></TrayIcon>
                    <TrayIcon><Volume1 size={20} strokeWidth={1} /></TrayIcon>
                    <LangLabel>ENG</LangLabel>
                    <Clock>
                        <span>1:47 PM</span>
                        <span>4/27/2025</span>
                    </Clock>
                    <Notify>
                        <BubbleIcon />
                        <NotifyCount>2</NotifyCount>
                    </Notify>
                </Tray>
            </Taskbar>
        </Shell>
    );
};

export default App;
